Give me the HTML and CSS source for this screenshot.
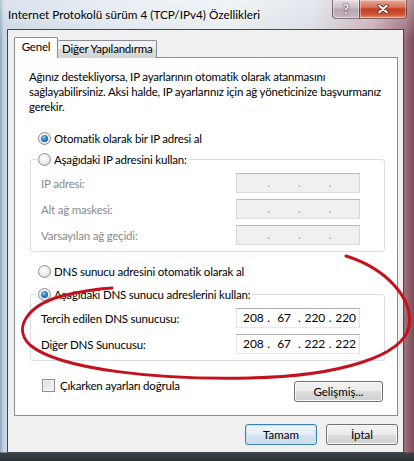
FILE: index.html
```html
<!DOCTYPE html>
<html>
<head>
    <link rel="stylesheet" href="styles.css">
</head>
<body>
    <div class="window">
        <div class="titlebar">
            <span class="title">Internet Protokolü sürüm 4 (TCP/IPv4) Özellikleri</span>
            <div class="caption-btns">
                <div class="cap help">?</div>
                <div class="cap close">
                    <svg viewBox="0 0 12 10" width="12" height="10">
                        <path d="M2 1.5l8 7M10 1.5l-8 7" stroke="#5a1a12" stroke-width="3.4" stroke-linecap="round"/>
                        <path d="M2 1.5l8 7M10 1.5l-8 7" stroke="#fff" stroke-width="2" stroke-linecap="round"/>
                    </svg>
                </div>
            </div>
        </div>

        <div class="client">
            <div class="tabs">
                <div class="tab active">Genel</div>
                <div class="tab">Diğer Yapılandırma</div>
            </div>

            <div class="panel">
                <p class="intro">Ağınız destekliyorsa, IP ayarlarının otomatik olarak atanmasını<br>sağlayabilirsiniz. Aksi halde, IP ayarlarınız için ağ yöneticinize başvurmanız<br>gerekir.</p>

                <div class="option first"><span class="radio on"></span>Otomatik olarak bir IP adresi al</div>
                <fieldset class="group ip-group">
                    <legend class="option"><span class="radio"></span>Aşağıdaki IP adresini kullan:</legend>
                    <div class="field disabled first">
                        <span>IP adresi:</span>
                        <div class="ip"><span class="seg"></span><span class="dot">.</span><span class="seg"></span><span class="dot">.</span><span class="seg"></span><span class="dot">.</span><span class="seg"></span></div>
                    </div>
                    <div class="field disabled">
                        <span>Alt ağ maskesi:</span>
                        <div class="ip"><span class="seg"></span><span class="dot">.</span><span class="seg"></span><span class="dot">.</span><span class="seg"></span><span class="dot">.</span><span class="seg"></span></div>
                    </div>
                    <div class="field disabled">
                        <span>Varsayılan ağ geçidi:</span>
                        <div class="ip"><span class="seg"></span><span class="dot">.</span><span class="seg"></span><span class="dot">.</span><span class="seg"></span><span class="dot">.</span><span class="seg"></span></div>
                    </div>
                </fieldset>

                <div class="option dns-auto"><span class="radio"></span>DNS sunucu adresini otomatik olarak al</div>
                <fieldset class="group dns-group">
                    <legend class="option"><span class="radio on"></span>Aşağıdaki DNS sunucu adreslerini kullan:</legend>
                    <div class="field first">
                        <span>Tercih edilen DNS sunucusu:</span>
                        <div class="ip"><span class="seg">208</span><span class="dot">.</span><span class="seg">67</span><span class="dot">.</span><span class="seg">220</span><span class="dot">.</span><span class="seg">220</span></div>
                    </div>
                    <div class="field">
                        <span>Diğer DNS Sunucusu:</span>
                        <div class="ip"><span class="seg">208</span><span class="dot">.</span><span class="seg">67</span><span class="dot">.</span><span class="seg">222</span><span class="dot">.</span><span class="seg">222</span></div>
                    </div>
                </fieldset>

                <div class="panel-foot">
                    <div class="check-row"><span class="check"></span>Çıkarken ayarları doğrula</div>
                    <button class="btn advanced">Gelişmiş...</button>
                </div>
            </div>

            <div class="actions">
                <button class="btn default">Tamam</button>
                <button class="btn">İptal</button>
            </div>
        </div>

        <!-- hand-drawn highlight around the DNS fields -->
        <svg class="marker" viewBox="0 0 414 461" width="414" height="461">
            <path d="M346 256 C 385 268, 414 298, 409 326 C 404 356, 340 376, 250 378 C 160 380, 60 370, 30 345 C 12 328, 28 305, 62 296 C 78 292, 96 289, 112 288" fill="none" stroke="#c3121d" stroke-width="3" stroke-linecap="round"/>
        </svg>
    </div>
</body>
</html>
```

FILE: styles.css
```css
* {
    margin: 0;
    padding: 0;
    box-sizing: border-box;
}

body {
    width: 414px;
    height: 461px;
    overflow: hidden;
    font-family: Lato, "Liberation Sans", sans-serif;
    font-size: 11.5px;
    letter-spacing: -0.2px;
    color: #000;
}

.window {
    position: relative;
    width: 414px;
    height: 461px;
    display: flex;
    flex-direction: column;
    padding: 0 10px 8px 7px;
    background:
        linear-gradient(to bottom, rgba(0, 0, 0, 0) 452px, #3a4246 453px, #2b3135 100%),
        linear-gradient(to bottom, rgba(255, 255, 255, 0.35), rgba(255, 255, 255, 0) 40px),
        linear-gradient(to right, #8ea6bd 0, #c9d6e3 4px, #dfe7ef 30%, #e8edf2 55%, #d9dee6 75%, #c8aab3 90%, #9b6c78 98%, #7a4c57 100%);
}

.titlebar {
    height: 29px;
    display: flex;
    align-items: flex-start;
    margin-right: -3px;
}

.title {
    padding: 7px 0 0 1px;
    line-height: 16px;
    font-size: 11.75px;
    letter-spacing: 0;
    white-space: nowrap;
    text-shadow: 0 0 6px rgba(255, 255, 255, 0.9);
}

.caption-btns {
    margin-left: auto;
    display: flex;
}

.cap {
    height: 19px;
    display: flex;
    align-items: center;
    justify-content: center;
    border: 1px solid rgba(60, 50, 60, 0.6);
    border-top: none;
    box-shadow: inset 0 0 0 1px rgba(255, 255, 255, 0.4);
}

.help {
    width: 27px;
    border-right: none;
    border-radius: 0 0 0 4px;
    background: linear-gradient(#e4d9e0, #cdbcc6 45%, #b7a3b0 50%, #c9b8c3);
    color: #fff;
    font-weight: bold;
    font-size: 13px;
    text-shadow: 0 0 2px #3a2a33, 0 0 1px #3a2a33;
}

.close {
    width: 48px;
    border-radius: 0 0 4px 0;
    background: linear-gradient(#e9a795, #d8735c 40%, #c43d22 50%, #cf5236 80%, #e59a78);
}

.client {
    flex: 1;
    display: flex;
    flex-direction: column;
    background: #f0f0f0;
    border: 1px solid #3d4a56;
    padding: 7px 5px 7px 6px;
}

.tabs {
    display: flex;
    align-items: flex-end;
    height: 21px;
    margin-bottom: -1px;
    position: relative;
    z-index: 1;
}

.tab {
    height: 18px;
    padding: 0 4px 0 4px;
    border: 1px solid #898c95;
    border-bottom: none;
    border-left: none;
    border-radius: 2px 2px 0 0;
    background: linear-gradient(#f4f4f4, #ececec 50%, #dedede 50%, #d2d2d2);
    line-height: 16px;
    white-space: nowrap;
}

.tab.active {
    height: 21px;
    width: 44px;
    padding: 1px 0 0 0;
    text-align: center;
    border-left: 1px solid #898c95;
    background: #fff;
}

.panel {
    height: 359px;
    background: #fff;
    border: 1px solid #898c95;
    padding: 11px 12px 0 14px;
}

.intro {
    line-height: 15px;
    white-space: nowrap;
}

.option {
    display: flex;
    align-items: center;
    gap: 3px;
    height: 17px;
    margin-left: 9px;
    white-space: nowrap;
}

.option.first {
    margin-top: 16px;
}

.radio {
    flex: none;
    width: 13px;
    height: 13px;
    border-radius: 50%;
    border: 1px solid #8e8f8f;
    background: radial-gradient(circle at 45% 40%, #ffffff, #eeeeee 45%, #cfcfcf);
    display: flex;
    align-items: center;
    justify-content: center;
}

.radio.on::after {
    content: "";
    width: 7px;
    height: 7px;
    border-radius: 50%;
    background: radial-gradient(circle at 40% 35%, #8fd0f2, #2a7fbf 45%, #0c4a7c);
}

.group {
    border: 1px solid #d5dfe5;
    border-radius: 3px;
    margin: 4px 0 0 1px;
    padding: 0 24px 6px 6px;
}

.group legend {
    margin-left: 0;
    padding: 0 2px 0 1px;
}

.dns-auto {
    margin-top: 11px;
}

.dns-group {
    margin-top: 6px;
}

.field {
    display: flex;
    align-items: center;
    justify-content: space-between;
    height: 20px;
    margin-top: 6px;
    padding-left: 4px;
}

.field.first {
    margin-top: 5px;
}

.field.disabled {
    color: #8a8a8a;
}

.ip {
    width: 124px;
    height: 20px;
    display: flex;
    align-items: center;
    padding-left: 3px;
    background: #fff;
    border: 1px solid;
    border-color: #abadb3 #dbdfe6 #e3e9ef #e2e3ea;
    line-height: 18px;
    letter-spacing: 0;
    font-size: 12px;
}

.disabled .ip {
    background: #f0f0f0;
    border-color: #b8b8b8 #d6d6d6 #dcdcdc #d6d6d6;
    color: #9a9a9a;
}

.seg {
    flex: 1;
    text-align: center;
}

.dot {
    width: 4px;
    text-align: center;
}

.panel-foot {
    display: flex;
    justify-content: space-between;
    align-items: flex-start;
    margin-top: 17px;
    padding: 0 2px 0 13px;
}

.check-row {
    display: flex;
    align-items: center;
    gap: 5px;
    height: 14px;
}

.check {
    width: 13px;
    height: 13px;
    border: 1px solid #8e8f8f;
    background: linear-gradient(135deg, #dcdcdc, #f6f6f6);
    box-shadow: inset 0 0 0 1px #f4f4f4;
}

.btn {
    height: 21px;
    border: 1px solid #707070;
    border-radius: 3px;
    background: linear-gradient(#f2f2f2, #ebebeb 50%, #dddddd 50%, #cfcfcf);
    box-shadow: inset 0 0 0 1px #fafafa;
    font-family: inherit;
    font-size: 11.5px;
    letter-spacing: 0;
    color: #000;
}

.advanced {
    width: 89px;
    margin-top: 3px;
}

.actions {
    display: flex;
    justify-content: flex-end;
    gap: 9px;
    margin-top: 8px;
}

.actions .btn {
    width: 72px;
}

.btn.default {
    border-color: #3c7fb1;
    background: linear-gradient(#eef5fa, #e4eef6 50%, #d5e5f0 50%, #c9dcea);
    box-shadow: inset 0 0 0 1px #c4e5f6;
}

.marker {
    position: absolute;
    top: 0;
    left: 0;
    pointer-events: none;
}
```
